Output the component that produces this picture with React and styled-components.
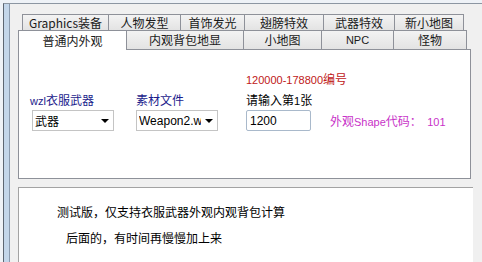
import React from 'react';
import styled, { createGlobalStyle } from 'styled-components';

const Global = createGlobalStyle`
  html, body { margin: 0; padding: 0; background: #f0f0f0; }
  body { font-family: "Noto Sans CJK SC", "Noto Sans", sans-serif; font-size: 12px; }
`;

const Window = styled.div`
  width: 482px;
  height: 262px;
  overflow: hidden;
  background: #eef2f7;
  padding: 3px 0 0 3px;
  box-sizing: border-box;
`;

const Frame = styled.div`
  display: flex;
  height: 100%;
  border-top: 1px solid #8c96a2;
  border-left: 1px solid #5c6672;
`;

const Strip = styled.div`
  width: 5px;
  background: #c3d6ea;
  border-right: 1px solid #8a9aae;
`;

const Content = styled.div`
  flex: 1;
  background: #f0f0f0;
  padding: 10px 0 0 8px;
`;

const Tabs = styled.div`
  width: 453px;
`;

const TabRow = styled.div`
  display: flex;
  height: ${p => p.$h}px;
  padding-left: ${p => p.$indent || 0}px;
  align-items: flex-end;
`;

const Tab = styled.div`
  width: ${p => p.$w}px;
  height: ${p => p.$h}px;
  box-sizing: border-box;
  border: 1px solid #8e9199;
  border-bottom: none;
  margin-right: -1px;
  background: linear-gradient(#f3f3f3, #e3e3e3);
  color: #1a1a1a;
  display: flex;
  align-items: center;
  justify-content: center;
  line-height: 1;
  ${p => p.$latin && 'font-family: "Liberation Sans", sans-serif; font-size: 11px;'}
  &:last-child { margin-right: 0; }
`;

const ActiveTab = styled(Tab)`
  background: #fff;
  height: ${p => p.$h + 1}px;
  margin-bottom: -1px;
  position: relative;
  z-index: 1;
`;

const Panel = styled.div`
  background: #fff;
  border: 1px solid #8e9199;
  display: flex;
  align-items: flex-end;
  padding: 0 0 47px 11px;
  box-sizing: border-box;
  height: 130px;
`;

const Column = styled.div`
  width: ${p => p.$w}px;
  display: flex;
  flex-direction: column;
`;

const Label = styled.div`
  color: ${p => p.$color || '#000'};
  height: 17px;
  line-height: 17px;
  white-space: nowrap;
  margin-bottom: ${p => p.$gap ?? 2}px;
`;

const Latin = styled.span`
  font-family: "Liberation Sans", sans-serif;
  font-size: 11px;
`;

const Select = styled.div`
  width: 82px;
  height: 21px;
  box-sizing: border-box;
  margin-left: ${p => p.$ml || 0}px;
  border: 1px solid #c4c4c4;
  background: #fff;
  display: flex;
  align-items: center;
  padding-left: 2px;
  overflow: hidden;
  white-space: nowrap;
`;

const SelectText = styled.span`
  flex: 1;
  overflow: hidden;
  ${p => p.$latin && 'font-family: "Liberation Sans", sans-serif; font-size: 12px;'}
`;

const Arrow = styled.span`
  width: 0;
  height: 0;
  border-left: 4px solid transparent;
  border-right: 4px solid transparent;
  border-top: 4px solid #000;
  margin: 0 4px 0 4px;
`;

const Input = styled.div`
  width: 65px;
  height: 21px;
  box-sizing: border-box;
  border: 1px solid #a9b9cb;
  border-radius: 2px;
  background: #fff;
  padding-left: 3px;
  display: flex;
  align-items: center;
  font-family: "Liberation Sans", sans-serif;
  font-size: 12px;
`;

const ShapeText = styled.div`
  color: #c832c8;
  height: 21px;
  line-height: 21px;
  white-space: nowrap;
`;

const Notes = styled.div`
  margin-top: 8px;
  width: 455px;
  height: 100px;
  background: #fff;
  border-top: 1px solid #a3a3a3;
  border-left: 1px solid #a3a3a3;
  padding: 15px 0 0 38px;
  box-sizing: border-box;
`;

const NoteLine = styled.div`
  height: 26px;
  line-height: 18px;
  padding-left: ${p => p.$indent || 0}px;
`;

const topTabs = [
  ['Graphics装备', 87],
  ['人物发型', 73],
  ['首饰发光', 65],
  ['翅膀特效', 80],
  ['武器特效', 72],
  ['新小地图', 70],
];

const bottomTabs = [
  ['普通内外观', 109, true],
  ['内观背包地显', 118],
  ['小地图', 79],
  ['NPC', 73],
  ['怪物', 74],
];

export default () => {
  return (
    <Window>
      <Global />
      <Frame>
        <Strip />
        <Content>
          <Tabs>
            <TabRow $h={16} $indent={4}>
              {topTabs.map(([t, w]) => (
                <Tab key={t} $w={w} $h={16}>{t}</Tab>
              ))}
            </TabRow>
            <TabRow $h={19}>
              {bottomTabs.map(([t, w, active]) =>
                active ? (
                  <ActiveTab key={t} $w={w} $h={19}>{t}</ActiveTab>
                ) : (
                  <Tab key={t} $w={w} $h={19} $latin={t === 'NPC'}>{t}</Tab>
                )
              )}
            </TabRow>
            <Panel>
              <Column $w={106}>
                <Label $color="#1c1c8c"><Latin>wzl</Latin>衣服武器</Label>
                <Select $ml={2}>
                  <SelectText>武器</SelectText>
                  <Arrow />
                </Select>
              </Column>
              <Column $w={110}>
                <Label $color="#1c1c8c">素材文件</Label>
                <Select>
                  <SelectText $latin>Weapon2.wzl</SelectText>
                  <Arrow />
                </Select>
              </Column>
              <Column $w={84}>
                <Label $color="#c01818" $gap={4}><Latin>120000-178800</Latin>编号</Label>
                <Label>请输入第<Latin>1</Latin>张</Label>
                <Input>1200</Input>
              </Column>
              <ShapeText>外观<Latin>Shape</Latin>代码：&nbsp;&nbsp;<Latin>101</Latin></ShapeText>
            </Panel>
          </Tabs>
          <Notes>
            <NoteLine>测试版，仅支持衣服武器外观内观背包计算</NoteLine>
            <NoteLine $indent={9}>后面的，有时间再慢慢加上来</NoteLine>
          </Notes>
        </Content>
      </Frame>
    </Window>
  );
};
